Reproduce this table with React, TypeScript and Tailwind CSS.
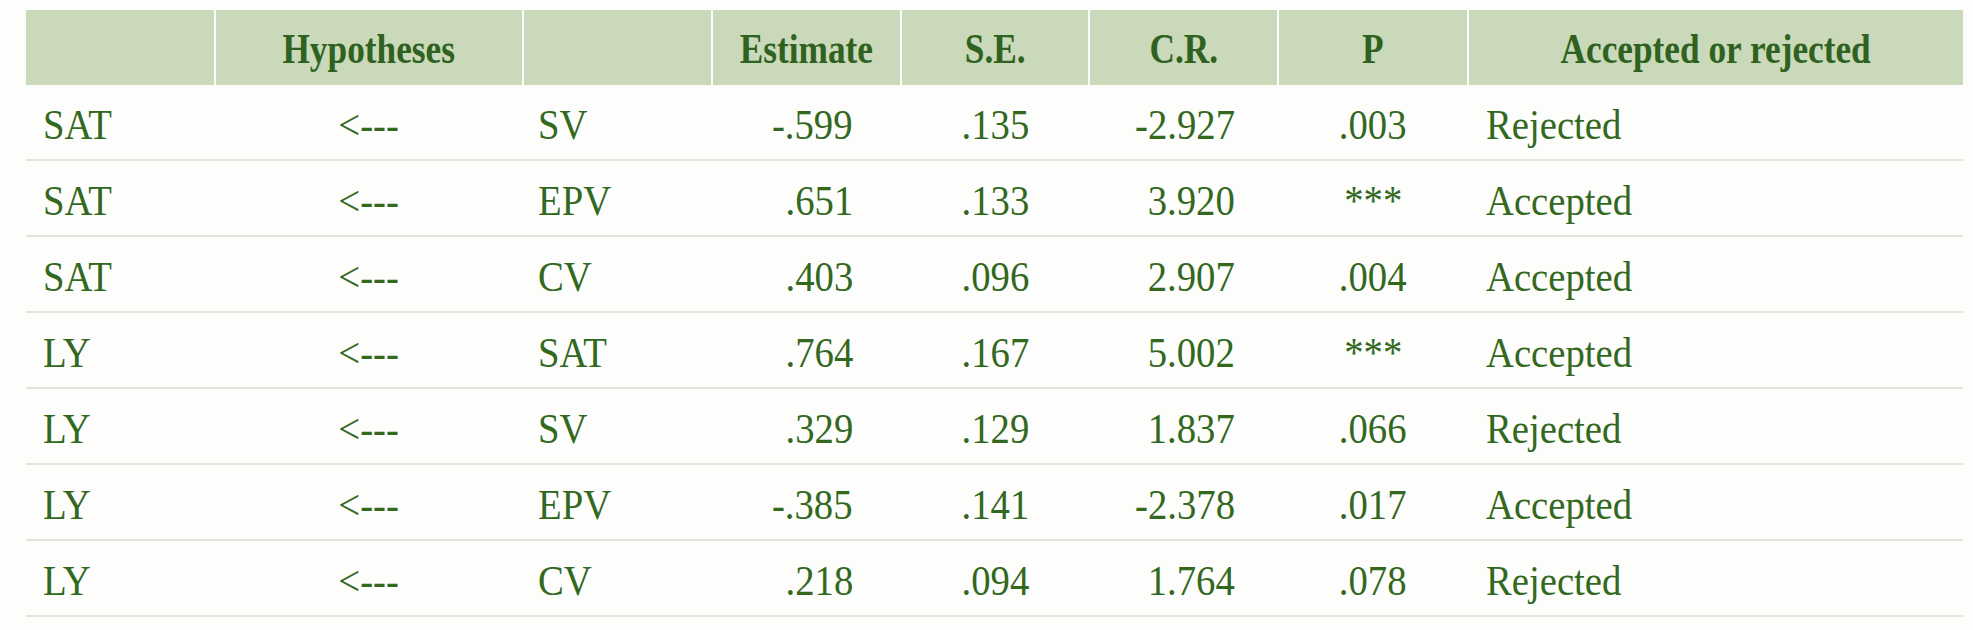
const rows = [
  ["SAT", "SV", "-.599", ".135", "-2.927", ".003", "Rejected"],
  ["SAT", "EPV", ".651", ".133", "3.920", "***", "Accepted"],
  ["SAT", "CV", ".403", ".096", "2.907", ".004", "Accepted"],
  ["LY", "SAT", ".764", ".167", "5.002", "***", "Accepted"],
  ["LY", "SV", ".329", ".129", "1.837", ".066", "Rejected"],
  ["LY", "EPV", "-.385", ".141", "-2.378", ".017", "Accepted"],
  ["LY", "CV", ".218", ".094", "1.764", ".078", "Rejected"],
];

const grid =
  "grid grid-cols-[188px_306px_187px_187px_186px_187px_188px_494px] gap-x-[2px]";

function Head({ children }: { children?: React.ReactNode }) {
  return (
    <div className="flex h-[75px] items-center justify-center bg-[#c9d9b9] pt-[2px]">
      {children && (
        <span className="inline-block scale-x-[0.84] origin-center text-[42px] font-bold leading-none text-[#2f6220]">
          {children}
        </span>
      )}
    </div>
  );
}

function Cell({
  children,
  align,
}: {
  children: React.ReactNode;
  align: string;
}) {
  const span = (
    <span className="inline-block scale-x-[0.9] text-[43px] leading-none text-[#33681f]">
      {children}
    </span>
  );
  return <div className={`flex h-[74px] items-center pt-[5px] ${align}`}>{span}</div>;
}

export default function App() {
  return (
    <main
      className="min-h-[630px] w-[1973px] bg-[#fdfdfb] pl-[26px] pt-[10px]"
      style={{ fontFamily: '"Liberation Serif", "Times New Roman", serif' }}
    >
      <div className="w-[1937px]">
        <div className={grid}>
          <Head />
          <Head>Hypotheses</Head>
          <Head />
          <Head>Estimate</Head>
          <Head>S.E.</Head>
          <Head>C.R.</Head>
          <Head>P</Head>
          <Head>Accepted or rejected</Head>
        </div>

        {rows.map((r, i) => (
          <div key={i} className={`${grid} border-b-2 border-[#e4e5da]`}>
            <Cell align="justify-start pl-[17px] [&>span]:origin-left">{r[0]}</Cell>
            <Cell align="justify-center [&>span]:origin-center">&lt;---</Cell>
            <Cell align="justify-start pl-[14px] [&>span]:origin-left">{r[1]}</Cell>
            <Cell align="justify-end pr-[47px] [&>span]:origin-right">{r[2]}</Cell>
            <Cell align="justify-end pr-[59px] [&>span]:origin-right">{r[3]}</Cell>
            <Cell align="justify-end pr-[42px] [&>span]:origin-right">{r[4]}</Cell>
            <Cell align="justify-center [&>span]:origin-center">{r[5]}</Cell>
            <Cell align="justify-start pl-[17px] [&>span]:origin-left">{r[6]}</Cell>
          </div>
        ))}
      </div>
    </main>
  );
}
